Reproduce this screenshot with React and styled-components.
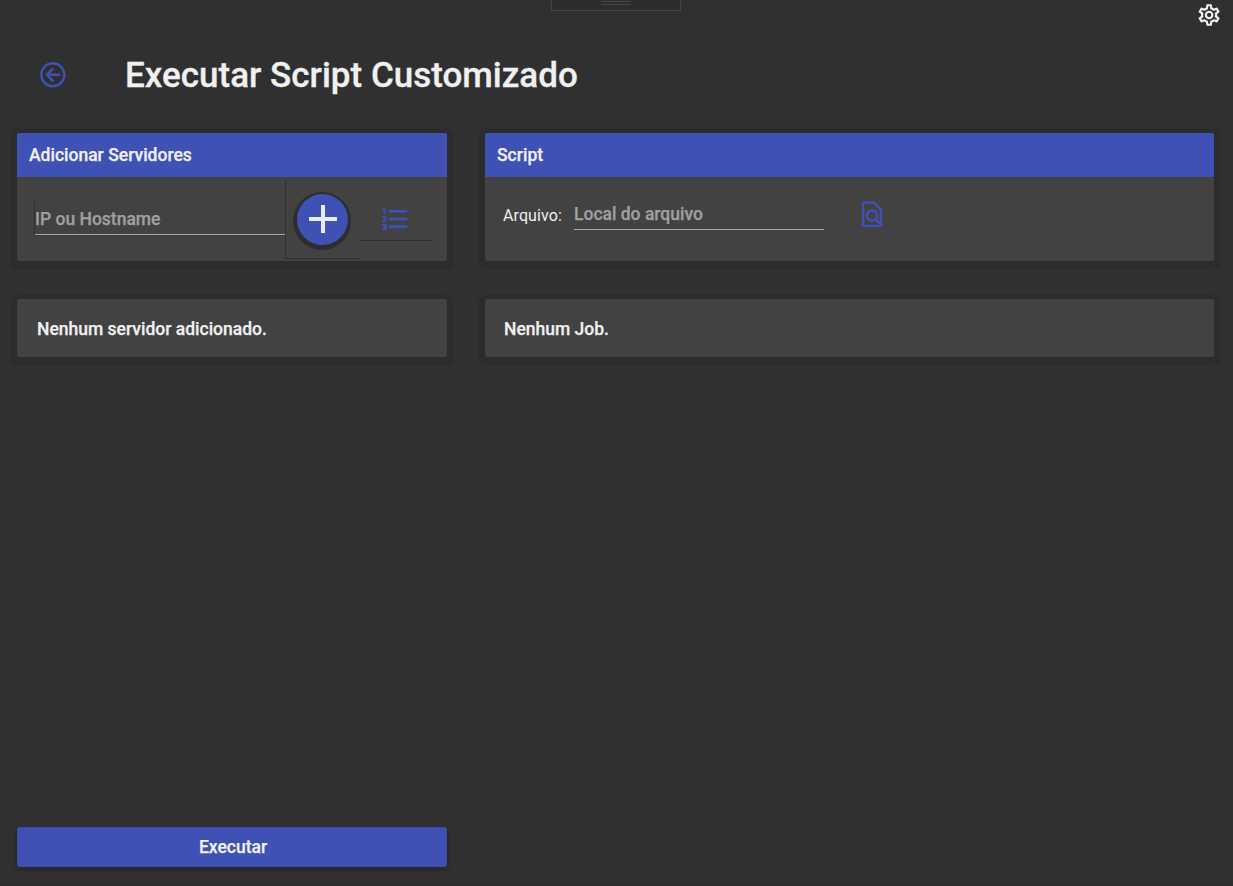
import React from 'react';
import styled, { createGlobalStyle } from 'styled-components';

const GlobalStyle = createGlobalStyle`
  * { box-sizing: border-box; }
  html, body { margin: 0; background: #303030; }
  body { font-family: Roboto, "Liberation Sans", sans-serif; color: #f0f0f0; overflow: hidden; }
  button { padding: 0; border: 0; background: none; font: inherit; color: inherit; cursor: pointer; }
  svg { display: block; }
`;

const Window = styled.div`
  position: relative;
  display: flex;
  flex-direction: column;
  height: 886px;
  padding: 0 19px 18px 17px;
  background: #303030;
  border-bottom: 1px solid #2d2a2c;
`;

const DebugHandle = styled.div`
  position: absolute;
  top: 0;
  left: 551px;
  width: 130px;
  height: 11px;
  padding-top: 1px;
  border: 1px solid #444446;
  border-top: 0;
  background: #2d2d30;
  display: flex;
  flex-direction: column;
  align-items: center;
  gap: 2px;
`;

const Grip = styled.span`
  width: 30px;
  height: 1px;
  background: #46464a;
`;

const SettingsButton = styled.button`
  position: absolute;
  top: 2px;
  right: 11px;
`;

const Header = styled.header`
  display: flex;
  align-items: center;
  height: 133px;
  padding: 17px 0 0 20px;
  flex: none;
`;

const BackButton = styled.button`
  width: 32px;
  margin-right: 56px;
`;

const Title = styled.h1`
  margin: 2px 0 0;
  font-size: 35px;
  line-height: 42px;
  font-weight: 500;
  white-space: nowrap;
  -webkit-text-stroke: 0.3px;
`;

const Columns = styled.main`
  display: grid;
  grid-template-columns: 430px 729px;
  column-gap: 38px;
  row-gap: 38px;
  grid-template-rows: 128px 58px;
`;

const Card = styled.section`
  border-radius: 2px;
  background: #424242;
  box-shadow: 0 2px 1px 5.5px #2c2c2c;
`;

const CardHeader = styled.h2`
  margin: 0;
  height: 44px;
  padding-left: 12px;
  border-radius: 2px 2px 0 0;
  background: #3f51b5;
  font-size: 17.5px;
  line-height: 44px;
  font-weight: 500;
  -webkit-text-stroke: 0.25px;
`;

const ServerRow = styled.div`
  display: flex;
  height: 84px;
  padding: 3px 15px 0 17px;
`;

const HostCell = styled.div`
  width: 251px;
  height: 56px;
  padding-top: 22px;
`;

const HostFrame = styled.div`
  height: 34px;
  border-left: 1px solid #303030;
  border-bottom: 1px solid #383838;
`;

const Input = styled.input`
  display: block;
  width: 250px;
  height: ${(p) => p.$height}px;
  padding: ${(p) => p.$inset || 0}px 0 0;
  border: 0;
  border-bottom: 1px solid #a9a9a9;
  outline: 0;
  background: transparent;
  color: #f0f0f0;
  font: 500 17.5px/22px Roboto, "Liberation Sans", sans-serif;
  -webkit-text-stroke: 0.25px;
  &::placeholder { color: #a0a0a0; opacity: 1; }
`;

const AddCell = styled.div`
  width: 75px;
  height: 79px;
  padding: 12px 0 0 7px;
  border-left: 1px solid #303030;
  border-bottom: 1px solid #303030;
`;

const AddButton = styled.button`
  display: flex;
  align-items: center;
  justify-content: center;
  width: 58px;
  height: 58px;
  border: solid #2e2e2e;
  border-width: 2px 3px 6px 4px;
  border-radius: 50%;
  background: #2e2e2e;
`;

const AddDisc = styled.span`
  display: flex;
  align-items: center;
  justify-content: center;
  flex: none;
  width: 51px;
  height: 51px;
  border-radius: 50%;
  background: #3f51b5;
`;

const ListCell = styled.div`
  width: 72px;
  height: 61px;
  padding: 24px 0 0 20px;
  border-bottom: 1px solid #303030;
`;

const FileRow = styled.div`
  display: flex;
  align-items: flex-start;
  padding: 21px 0 0 18px;
`;

const Label = styled.label`
  width: 71px;
  padding-top: 8px;
  font-size: 16px;
  line-height: 20px;
  letter-spacing: 0.1px;
`;

const BrowseButton = styled.button`
  margin: 1px 0 0 33px;
`;

const Message = styled.p`
  margin: 0;
  padding-left: ${(p) => p.$indent}px;
  font-size: 17.5px;
  line-height: 60px;
  height: 58px;
  font-weight: 500;
  -webkit-text-stroke: 0.25px;
`;

const RunButton = styled.button`
  && {
    width: 430px;
    height: 40px;
    margin-top: auto;
    padding-left: 2px;
    border: 1px solid #3a4aa6;
    border-radius: 2px;
    background: #3f51b5;
    box-shadow: 0 2px 2px 2px #2b2b2b;
    font-size: 17.5px;
    font-weight: 500;
    -webkit-text-stroke: 0.25px;
  }
`;

const GearIcon = () => (
  <svg width="26" height="26" viewBox="-0.1 0 24 24" fill="#f0f0f0">
    <path d="M12,8A4,4 0 0,1 16,12A4,4 0 0,1 12,16A4,4 0 0,1 8,12A4,4 0 0,1 12,8M12,10A2,2 0 0,0 10,12A2,2 0 0,0 12,14A2,2 0 0,0 14,12A2,2 0 0,0 12,10M10,22C9.75,22 9.54,21.82 9.5,21.58L9.13,18.93C8.5,18.68 7.96,18.34 7.44,17.94L4.95,18.95C4.73,19.03 4.46,18.95 4.34,18.73L2.34,15.27C2.21,15.05 2.27,14.78 2.46,14.63L4.57,12.97L4.5,12L4.57,11L2.46,9.37C2.27,9.22 2.21,8.95 2.34,8.73L4.34,5.27C4.46,5.05 4.73,4.96 4.95,5.05L7.44,6.05C7.96,5.66 8.5,5.32 9.13,5.07L9.5,2.42C9.54,2.18 9.75,2 10,2H14C14.25,2 14.46,2.18 14.5,2.42L14.87,5.07C15.5,5.32 16.04,5.66 16.56,6.05L19.05,5.05C19.27,4.96 19.54,5.05 19.66,5.27L21.66,8.73C21.79,8.95 21.73,9.22 21.54,9.37L19.43,11L19.5,12L19.43,13L21.54,14.63C21.73,14.78 21.79,15.05 21.66,15.27L19.66,18.73C19.54,18.95 19.27,19.04 19.05,18.95L16.56,17.95C16.04,18.34 15.5,18.68 14.87,18.93L14.5,21.58C14.46,21.82 14.25,22 14,22H10M11.25,4L10.88,6.61C9.68,6.86 8.62,7.5 7.85,8.39L5.44,7.35L4.69,8.65L6.8,10.2C6.4,11.37 6.4,12.64 6.8,13.8L4.68,15.36L5.43,16.66L7.86,15.62C8.63,16.5 9.68,17.14 10.87,17.38L11.24,20H12.76L13.13,17.39C14.32,17.14 15.37,16.5 16.14,15.62L18.57,16.66L19.32,15.36L17.2,13.81C17.6,12.64 17.6,11.37 17.2,10.2L19.31,8.65L18.56,7.35L16.15,8.39C15.38,7.5 14.32,6.86 13.12,6.62L12.75,4H11.25Z" />
  </svg>
);

const BackIcon = () => (
  <svg width="32" height="32" viewBox="0 0 32 32" fill="none" stroke="#3f51b5" strokeWidth="2.4" strokeLinecap="round" strokeLinejoin="round">
    <circle cx="15.8" cy="15.8" r="11.5" />
    <path d="M22.3 15.8H10.2M15.6 10L9.8 15.8l5.8 5.8" />
  </svg>
);

const PlusIcon = () => (
  <svg width="28" height="28" viewBox="0 0 28 28" fill="#e8eaf6">
    <path d="M12 0h4v12h12v4H16v12h-4V16H0v-4h12z" />
  </svg>
);

const NumberedListIcon = () => (
  <svg width="31" height="31" viewBox="0 0.35 24 24" fill="#3f51b5" stroke="#3f51b5" strokeWidth="0.2">
    <path d="M7,13V11H21V13H7M7,19V17H21V19H7M7,7V5H21V7H7" />
    <path strokeWidth="0.5" d="M3,8V5H2V4H4V8H3M2,17V16H5V20H2V19H4V18.5H3V17.5H4V17H2M4.25,10A0.75,0.75 0 0,1 5,10.75C5,10.95 4.92,11.14 4.79,11.27L3.12,13H5V14H2V13.08L4,11H2V10H4.25Z" />
  </svg>
);

const FindFileIcon = () => (
  <svg width="30" height="30" viewBox="0 0.1 24 23.4" preserveAspectRatio="none" fill="none" stroke="#3f51b5" strokeWidth="2" strokeLinejoin="round">
    <path d="M19.1 20V8.4L13.6 2.9H6A1.1 1.1 0 0 0 4.9 4v16A1.1 1.1 0 0 0 6 21.1h12a1.1 1.1 0 0 0 1.1-1.1z" />
    <circle cx="12" cy="13" r="4" />
    <path d="M14.9 15.9l4.5 4.4" />
  </svg>
);

export default function App() {
  return (
    <>
      <GlobalStyle />
      <Window>
        <DebugHandle>
          <Grip />
          <Grip />
        </DebugHandle>
        <SettingsButton aria-label="Configurações"><GearIcon /></SettingsButton>
        <Header>
          <BackButton aria-label="Voltar"><BackIcon /></BackButton>
          <Title>Executar Script Customizado</Title>
        </Header>
        <Columns>
          <Card>
            <CardHeader>Adicionar Servidores</CardHeader>
            <ServerRow>
              <HostCell>
                <HostFrame><Input $height={33} $inset={2} placeholder="IP ou Hostname" /></HostFrame>
              </HostCell>
              <AddCell>
                <AddButton aria-label="Adicionar"><AddDisc><PlusIcon /></AddDisc></AddButton>
              </AddCell>
              <ListCell>
                <button aria-label="Lista"><NumberedListIcon /></button>
              </ListCell>
            </ServerRow>
          </Card>
          <Card>
            <CardHeader>Script</CardHeader>
            <FileRow>
              <Label>Arquivo:</Label>
              <Input $height={32} placeholder="Local do arquivo" />
              <BrowseButton aria-label="Procurar"><FindFileIcon /></BrowseButton>
            </FileRow>
          </Card>
          <Card><Message $indent={20}>Nenhum servidor adicionado.</Message></Card>
          <Card><Message $indent={19}>Nenhum Job.</Message></Card>
        </Columns>
        <RunButton>Executar</RunButton>
      </Window>
    </>
  );
}
